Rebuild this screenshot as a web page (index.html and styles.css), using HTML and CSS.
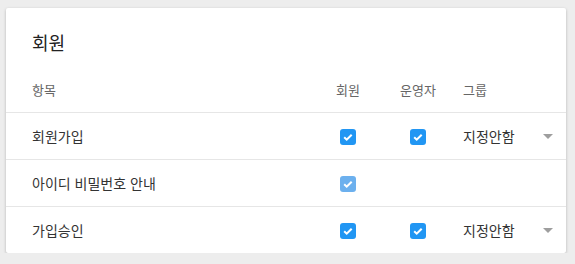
FILE: index.html
```html
<!DOCTYPE html>
<html lang="ko">
<head>
    <meta charset="UTF-8">
    <meta name="viewport" content="width=device-width, initial-scale=1.0">
    <title>회원 권한</title>
    <link rel="stylesheet" href="styles.css">
</head>
<body>
    <div class="card">
        <h2 class="card-title">회원</h2>
        <div class="row head">
            <div class="cell name">항목</div>
            <div class="cell mid">회원</div>
            <div class="cell mid">운영자</div>
            <div class="cell group">그룹</div>
        </div>
        <div class="row">
            <div class="cell name">회원가입</div>
            <div class="cell mid"><span class="check"><svg viewBox="0 0 16 16"><path d="M4.2 8.3l2.5 2.4 5-5" /></svg></span></div>
            <div class="cell mid"><span class="check"><svg viewBox="0 0 16 16"><path d="M4.2 8.3l2.5 2.4 5-5" /></svg></span></div>
            <div class="cell group">지정안함<span class="caret"></span></div>
        </div>
        <div class="row">
            <div class="cell name">아이디 비밀번호 안내</div>
            <div class="cell mid"><span class="check disabled"><svg viewBox="0 0 16 16"><path d="M4.2 8.3l2.5 2.4 5-5" /></svg></span></div>
            <div class="cell mid"></div>
            <div class="cell group"></div>
        </div>
        <div class="row last">
            <div class="cell name">가입승인</div>
            <div class="cell mid"><span class="check"><svg viewBox="0 0 16 16"><path d="M4.2 8.3l2.5 2.4 5-5" /></svg></span></div>
            <div class="cell mid"><span class="check"><svg viewBox="0 0 16 16"><path d="M4.2 8.3l2.5 2.4 5-5" /></svg></span></div>
            <div class="cell group">지정안함<span class="caret"></span></div>
        </div>
    </div>
</body>
</html>
```

FILE: styles.css
```css
body {
    margin: 0;
    padding: 8px 9px 0 6px;
    background-color: #ededed;
    font-family: "Noto Sans CJK KR", "Noto Sans", sans-serif;
    color: #333;
}
.card {
    width: 560px;
    height: 245px;
    background-color: #fff;
    border-radius: 2px;
    box-shadow: 0 1px 3px rgba(0, 0, 0, 0.25);
    overflow: hidden;
}
.card-title {
    margin: 0;
    padding: 22px 0 12px 26px;
    font-size: 18px;
    font-weight: normal;
    line-height: 24px;
    color: #222;
}
.row {
    display: grid;
    grid-template-columns: 312px 60px 80px 1fr;
    height: 46px;
    align-items: center;
    border-bottom: 1px solid #e6e6e6;
    font-size: 14px;
}
.row.last {
    border-bottom: none;
}
.row.head {
    font-size: 13px;
    color: #666;
}
.cell {
    display: flex;
    align-items: center;
}
.name {
    padding-left: 26px;
}
.mid {
    justify-content: center;
}
.head .mid:first-of-type {
    padding-left: 2px;
}
.group {
    padding: 0 13px 0 5px;
    justify-content: space-between;
}
.check {
    display: block;
    width: 16px;
    height: 16px;
    border-radius: 3px;
    background-color: #2196f3;
    margin-top: 1px;
}
.check.disabled {
    background-color: #6cb0ee;
}
.check svg {
    display: block;
    width: 16px;
    height: 16px;
    fill: none;
    stroke: #fff;
    stroke-width: 2;
}
.caret {
    width: 0;
    height: 0;
    border-left: 5px solid transparent;
    border-right: 5px solid transparent;
    border-top: 5px solid #9e9e9e;
}
```
